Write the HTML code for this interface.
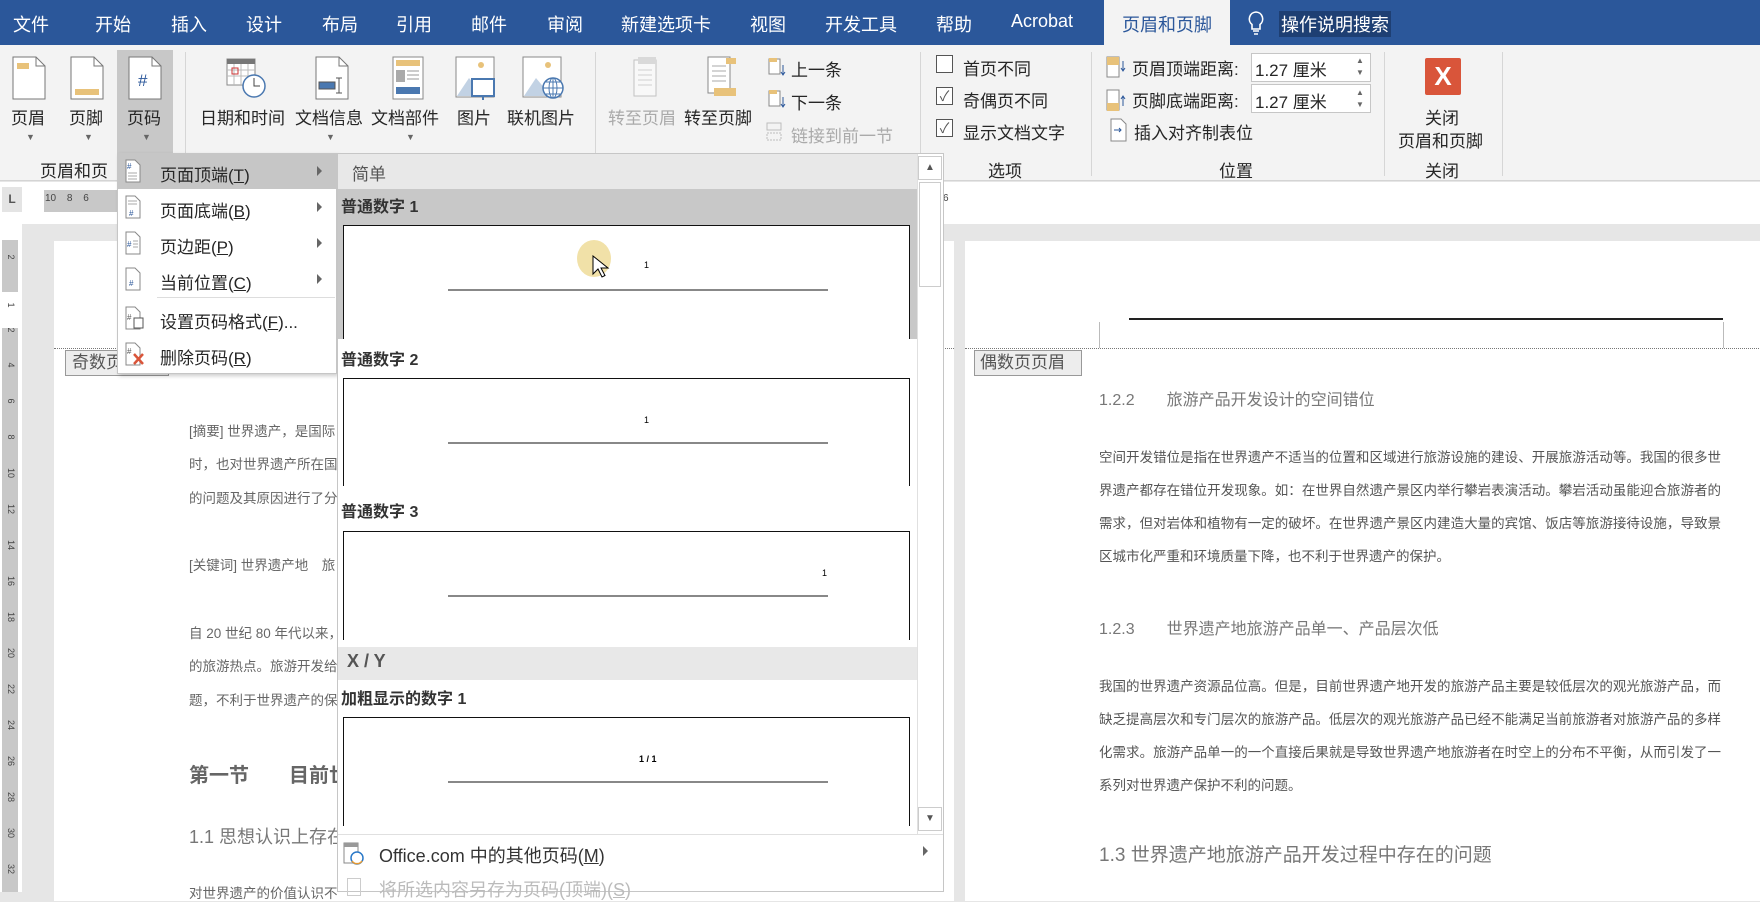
<!DOCTYPE html>
<html><head><meta charset="utf-8">
<style>
*{margin:0;padding:0;box-sizing:border-box}
body{width:1760px;height:892px;overflow:hidden;position:relative;background:#e6e6e6;font-family:"Liberation Sans","Noto Sans CJK SC",sans-serif;color:#333}
.a{position:absolute;white-space:nowrap}
.tab{position:absolute;top:11px;color:#fff;font-size:18px}
.rl{position:absolute;font-size:17px;color:#262626}
.gl{position:absolute;top:157px;font-size:17px;color:#262626}
.sep{position:absolute;top:52px;width:1px;height:124px;background:#d6d6d6}
.dd{position:absolute;font-size:9px;color:#666}
.mi{position:absolute;left:160px;font-size:17px;color:#262626}
.arr{position:absolute;left:317px;width:0;height:0;border-left:5px solid #666;border-top:5px solid transparent;border-bottom:5px solid transparent}
.glab{position:absolute;left:341px;font-size:16px;font-weight:bold;color:#333}
.box{position:absolute;left:343px;width:567px;background:#fff;border:1.5px solid #111}
.box .ln{position:absolute;left:104px;width:380px;height:2px;background:#888}
.box .n{position:absolute;font-size:9px;color:#000}
.pt{position:absolute;font-size:13.5px;color:#666}
.rp{position:absolute;left:1099px;width:622px;font-size:13.5px;color:#555;text-align:justify;text-align-last:justify;white-space:nowrap;overflow:hidden}
.vn{position:absolute;left:4px;width:14px;font-size:9px;color:#444;transform:rotate(90deg);text-align:center}
</style></head><body>
<div class="a" style="left:0;top:0;width:1760px;height:45px;background:#2b579a"></div>
<div class="tab" style="left:13px">文件</div>
<div class="tab" style="left:95px">开始</div>
<div class="tab" style="left:171px">插入</div>
<div class="tab" style="left:246px">设计</div>
<div class="tab" style="left:322px">布局</div>
<div class="tab" style="left:396px">引用</div>
<div class="tab" style="left:471px">邮件</div>
<div class="tab" style="left:547px">审阅</div>
<div class="tab" style="left:621px">新建选项卡</div>
<div class="tab" style="left:750px">视图</div>
<div class="tab" style="left:825px">开发工具</div>
<div class="tab" style="left:936px">帮助</div>
<div class="tab" style="left:1011px">Acrobat</div>
<div class="a" style="left:1104px;top:0;width:126px;height:46px;background:#f3f3f3"></div>
<div class="tab" style="left:1122px;color:#2b579a">页眉和页脚</div>
<svg class="a" style="left:1246px;top:10px" width="20" height="26" viewBox="0 0 20 26"><path d="M10 2a7 7 0 0 0-4 12.5V19h8v-4.5A7 7 0 0 0 10 2zM7 21h6M8 24h4" fill="none" stroke="#fff" stroke-width="1.6"/></svg>
<div class="tab" style="left:1279px;background:#1e3f73;padding:0 2px">操作说明搜索</div>

<div class="a" style="left:0;top:45px;width:1760px;height:136px;background:#f3f3f3;border-bottom:1px solid #d4d4d4"></div>
<div class="a" style="left:117px;top:50px;width:56px;height:104px;background:#c8c8c8"></div>
<svg class="a" style="left:12px;top:56px" width="34" height="44"><path d="M1 1h23l9 9v33H1z" fill="#fff" stroke="#777"/><path d="M24 1v9h9" fill="none" stroke="#777"/><rect x="5" y="7" width="12" height="6" fill="#e8c27a"/></svg>
<svg class="a" style="left:70px;top:56px" width="34" height="44"><path d="M1 1h23l9 9v33H1z" fill="#fff" stroke="#777"/><path d="M24 1v9h9" fill="none" stroke="#777"/><rect x="5" y="33" width="24" height="6" fill="#e8c27a"/></svg>
<svg class="a" style="left:128px;top:56px" width="34" height="44"><path d="M1 1h23l9 9v33H1z" fill="#fff" stroke="#777"/><path d="M24 1v9h9" fill="none" stroke="#777"/><text x="10" y="30" font-size="17" fill="#2b579a" font-family="Liberation Sans">#</text></svg>
<div class="rl" style="left:11px;top:104px">页眉</div>
<div class="rl" style="left:69px;top:104px">页脚</div>
<div class="rl" style="left:127px;top:104px">页码</div>
<div class="dd" style="left:26px;top:132px">▼</div><div class="dd" style="left:84px;top:132px">▼</div><div class="dd" style="left:142px;top:132px">▼</div>
<div class="sep" style="left:185px"></div>
<svg class="a" style="left:226px;top:58px" width="42" height="42"><rect x="1" y="1" width="28" height="26" fill="#fff" stroke="#888"/><rect x="1" y="1" width="28" height="5" fill="#777"/><path d="M1 12h28M1 18h28M8 6v21M15 6v21M22 6v21" stroke="#bbb"/><rect x="6" y="10" width="6" height="6" fill="none" stroke="#c33"/><circle cx="28" cy="28" r="11" fill="#fff" stroke="#4a78b0" stroke-width="1.5"/><path d="M28 20v8h6" fill="none" stroke="#444"/></svg>
<svg class="a" style="left:315px;top:56px" width="34" height="44"><path d="M1 1h23l9 9v33H1z" fill="#fff" stroke="#777"/><path d="M24 1v9h9" fill="none" stroke="#777"/><rect x="4" y="26" width="16" height="7" fill="#4a78b0" stroke="#555"/><path d="M24 22v15M21 22h6M21 37h6" stroke="#555"/></svg>
<svg class="a" style="left:392px;top:56px" width="32" height="44"><rect x="1" y="1" width="30" height="42" fill="#fff" stroke="#888"/><rect x="4" y="4" width="24" height="6" fill="#e8c27a"/><rect x="4" y="14" width="9" height="12" fill="#aaa"/><path d="M15 15h12M15 19h12M15 23h12" stroke="#999"/><rect x="4" y="31" width="24" height="7" fill="#4a78b0"/></svg>
<svg class="a" style="left:455px;top:56px" width="44" height="46"><rect x="1" y="1" width="38" height="40" fill="#fff" stroke="#888"/><circle cx="26" cy="9" r="3" fill="#e8c27a"/><path d="M2 40l12-18 10 12 6-6 9 12z" fill="#c2d2e4"/><rect x="17" y="23" width="22" height="17" fill="#fff" stroke="#4a78b0" stroke-width="2"/><path d="M28 40v4" stroke="#4a78b0" stroke-width="2"/></svg>
<svg class="a" style="left:522px;top:56px" width="44" height="46"><rect x="1" y="1" width="38" height="40" fill="#fff" stroke="#888"/><circle cx="26" cy="9" r="3" fill="#e8c27a"/><path d="M2 40l12-18 10 12 6-6 9 12z" fill="#c2d2e4"/><circle cx="31" cy="32" r="10" fill="#fff" stroke="#4a78b0" stroke-width="1.5"/><path d="M21 32h20M31 22v20M24 26h14M24 38h14" stroke="#4a78b0"/><ellipse cx="31" cy="32" rx="4" ry="10" fill="none" stroke="#4a78b0"/></svg>
<div class="rl" style="left:200px;top:104px">日期和时间</div>
<div class="rl" style="left:295px;top:104px">文档信息</div>
<div class="rl" style="left:371px;top:104px">文档部件</div>
<div class="rl" style="left:457px;top:104px">图片</div>
<div class="rl" style="left:507px;top:104px">联机图片</div>
<div class="dd" style="left:326px;top:132px">▼</div><div class="dd" style="left:406px;top:132px">▼</div>
<div class="sep" style="left:595px"></div>
<svg class="a" style="left:630px;top:56px" width="30" height="44" opacity=".45"><rect x="4" y="4" width="22" height="36" fill="#fff" stroke="#888"/><rect x="8" y="1" width="18" height="7" fill="#bbb"/><path d="M8 14h14M8 19h14M8 24h14M8 29h14" stroke="#aaa"/></svg>
<svg class="a" style="left:706px;top:56px" width="32" height="44"><rect x="2" y="1" width="22" height="36" fill="#fff" stroke="#888"/><path d="M6 10h14M6 15h14M6 20h14M6 25h14" stroke="#aaa"/><rect x="8" y="32" width="22" height="8" fill="#e8c27a"/><rect x="20" y="2" width="10" height="6" fill="#e8c27a"/></svg>
<div class="rl" style="left:608px;top:104px;color:#aaa">转至页眉</div>
<div class="rl" style="left:684px;top:104px">转至页脚</div>
<svg class="a" style="left:768px;top:57px" width="18" height="20"><rect x="1" y="2" width="11" height="15" fill="#fff" stroke="#888"/><rect x="1" y="1" width="8" height="4" fill="#e8c27a"/><path d="M15 8v9M13 15l2 3 2-3" stroke="#2b579a" fill="none"/></svg>
<svg class="a" style="left:768px;top:89px" width="18" height="20"><rect x="1" y="2" width="11" height="15" fill="#fff" stroke="#888"/><rect x="1" y="1" width="8" height="4" fill="#e8c27a"/><path d="M15 8v9M13 15l2 3 2-3" stroke="#2b579a" fill="none"/></svg>
<div class="rl" style="left:791px;top:56px">上一条</div>
<div class="rl" style="left:791px;top:89px">下一条</div>
<svg class="a" style="left:766px;top:122px" width="18" height="20" opacity=".5"><rect x="1" y="1" width="14" height="7" fill="none" stroke="#888"/><rect x="1" y="11" width="14" height="7" fill="none" stroke="#888" stroke-dasharray="2 1"/></svg>
<div class="rl" style="left:791px;top:122px;color:#aaa">链接到前一节</div>
<div class="sep" style="left:920px"></div>
<div class="a" style="left:936px;top:55px;width:17px;height:18px;border:1px solid #555;background:#fff"></div>
<div class="a" style="left:936px;top:87px;width:17px;height:18px;border:1px solid #555;background:#fff;font-size:14px;line-height:16px;text-align:center;color:#555">✓</div>
<div class="a" style="left:936px;top:119px;width:17px;height:18px;border:1px solid #555;background:#fff;font-size:14px;line-height:16px;text-align:center;color:#555">✓</div>
<div class="rl" style="left:963px;top:55px">首页不同</div>
<div class="rl" style="left:963px;top:87px">奇偶页不同</div>
<div class="rl" style="left:963px;top:119px">显示文档文字</div>
<div class="sep" style="left:1091px"></div>
<svg class="a" style="left:1106px;top:56px" width="22" height="24"><rect x="1" y="1" width="12" height="20" fill="#fff" stroke="#888"/><rect x="1" y="1" width="12" height="8" fill="#e8c27a"/><path d="M17 5v9M15 12l2 3 2-3" stroke="#2b579a" fill="none"/></svg>
<svg class="a" style="left:1106px;top:89px" width="22" height="24"><rect x="1" y="1" width="12" height="20" fill="#fff" stroke="#888"/><rect x="1" y="14" width="12" height="8" fill="#e8c27a"/><path d="M17 17v-9M15 10l2-3 2 3" stroke="#2b579a" fill="none"/></svg>
<div class="rl" style="left:1132px;top:55px">页眉顶端距离:</div>
<div class="rl" style="left:1132px;top:87px">页脚底端距离:</div>
<div class="a" style="left:1251px;top:53px;width:120px;height:29px;background:#fff;border:1px solid #c6c6c6"></div>
<div class="a" style="left:1251px;top:84px;width:120px;height:29px;background:#fff;border:1px solid #c6c6c6"></div>
<div class="rl" style="left:1255px;top:56px">1.27 厘米</div>
<div class="rl" style="left:1255px;top:88px">1.27 厘米</div>
<div class="dd" style="left:1356px;top:55px;font-size:8px;line-height:12px">▲<br>▼</div>
<div class="dd" style="left:1356px;top:87px;font-size:8px;line-height:12px">▲<br>▼</div>
<svg class="a" style="left:1110px;top:118px" width="18" height="24"><path d="M1 1h10l5 5v17H1z" fill="#fff" stroke="#888"/><path d="M4 12h7M9 10l2 2-2 2" stroke="#2b579a" fill="none"/></svg>
<div class="rl" style="left:1134px;top:119px">插入对齐制表位</div>
<div class="sep" style="left:1384px"></div>
<div class="a" style="left:1425px;top:58px;width:36px;height:37px;background:#d9553a;border-radius:2px;color:#fff;font-size:26px;font-weight:bold;text-align:center;line-height:37px">X</div>
<div class="rl" style="left:1425px;top:104px">关闭</div>
<div class="rl" style="left:1398px;top:127px">页眉和页脚</div>
<div class="sep" style="left:1502px"></div>
<div class="gl" style="left:40px">页眉和页</div>
<div class="gl" style="left:988px">选项</div>
<div class="gl" style="left:1219px">位置</div>
<div class="gl" style="left:1425px">关闭</div>

<div class="a" style="left:0;top:182px;width:1760px;height:42px;background:#fff"></div>
<div class="a" style="left:2px;top:187px;width:20px;height:25px;background:#e4e4e4;font-size:12px;font-weight:bold;color:#555;text-align:center;line-height:25px">L</div>
<div class="a" style="left:44px;top:190px;width:90px;height:22px;background:#c8c8c8"></div>
<div class="a" style="left:45px;top:193px;font-size:10px;color:#444;word-spacing:8px">10 8 6</div>
<div class="a" style="left:943px;top:193px;font-size:10px;color:#444">6</div>
<div class="a" style="left:0;top:224px;width:22px;height:668px;background:#fff"></div>
<div class="a" style="left:2px;top:240px;width:16px;height:652px;background:#c8c8c8"></div>
<div class="a" style="left:2px;top:292px;width:16px;height:36px;background:#fff"></div>
<div class="vn" style="top:252px">2</div>
<div class="vn" style="top:300px">1</div>
<div class="vn" style="top:325px">2</div>
<div class="vn" style="top:360px">4</div>
<div class="vn" style="top:396px">6</div>
<div class="vn" style="top:432px">8</div>
<div class="vn" style="top:468px">10</div>
<div class="vn" style="top:504px">12</div>
<div class="vn" style="top:540px">14</div>
<div class="vn" style="top:576px">16</div>
<div class="vn" style="top:612px">18</div>
<div class="vn" style="top:648px">20</div>
<div class="vn" style="top:684px">22</div>
<div class="vn" style="top:720px">24</div>
<div class="vn" style="top:756px">26</div>
<div class="vn" style="top:792px">28</div>
<div class="vn" style="top:828px">30</div>
<div class="vn" style="top:864px">32</div>

<div class="a" style="left:54px;top:241px;width:900px;height:660px;background:#fff"></div>
<div class="a" style="left:54px;top:348px;width:900px;border-top:1px dotted #777"></div>
<div class="a" style="left:65px;top:350px;width:104px;height:26px;background:#ededed;border:1px solid #999;font-size:17px;color:#555;padding-left:6px;line-height:24px">奇数页页眉</div>
<div class="pt" style="left:189px;top:420px">[摘要] 世界遗产，是国际</div>
<div class="pt" style="left:189px;top:453px">时，也对世界遗产所在国</div>
<div class="pt" style="left:189px;top:487px">的问题及其原因进行了分</div>
<div class="pt" style="left:189px;top:554px">[关键词] 世界遗产地　旅</div>
<div class="pt" style="left:189px;top:622px">自 20 世纪 80 年代以来，</div>
<div class="pt" style="left:189px;top:655px">的旅游热点。旅游开发给</div>
<div class="pt" style="left:189px;top:689px">题，不利于世界遗产的保</div>
<div class="a" style="left:189px;top:759px;font-size:20px;font-weight:bold;color:#666">第一节　　目前世</div>
<div class="a" style="left:189px;top:823px;font-size:18px;color:#777">1.1 思想认识上存在</div>
<div class="pt" style="left:189px;top:882px">对世界遗产的价值认识不</div>

<div class="a" style="left:965px;top:241px;width:800px;height:660px;background:#fff"></div>
<div class="a" style="left:1129px;top:318px;width:594px;height:2px;background:#222"></div>
<div class="a" style="left:1099px;top:322px;width:1px;height:26px;background:#bbb"></div>
<div class="a" style="left:1723px;top:322px;width:1px;height:26px;background:#bbb"></div>
<div class="a" style="left:965px;top:348px;width:800px;border-top:1px dotted #777"></div>
<div class="a" style="left:974px;top:350px;width:108px;height:26px;background:#ededed;border:1px solid #999;font-size:17px;color:#555;padding-left:5px;line-height:24px">偶数页页眉</div>
<div class="a" style="left:1099px;top:386px;font-size:16px;color:#777">1.2.2　　旅游产品开发设计的空间错位</div>
<div class="rp" style="top:446px">空间开发错位是指在世界遗产不适当的位置和区域进行旅游设施的建设、开展旅游活动等。我国的很多世</div>
<div class="rp" style="top:479px">界遗产都存在错位开发现象。如：在世界自然遗产景区内举行攀岩表演活动。攀岩活动虽能迎合旅游者的</div>
<div class="rp" style="top:512px">需求，但对岩体和植物有一定的破坏。在世界遗产景区内建造大量的宾馆、饭店等旅游接待设施，导致景</div>
<div class="rp" style="top:545px;text-align-last:left">区城市化严重和环境质量下降，也不利于世界遗产的保护。</div>
<div class="a" style="left:1099px;top:615px;font-size:16px;color:#777">1.2.3　　世界遗产地旅游产品单一、产品层次低</div>
<div class="rp" style="top:675px">我国的世界遗产资源品位高。但是，目前世界遗产地开发的旅游产品主要是较低层次的观光旅游产品，而</div>
<div class="rp" style="top:708px">缺乏提高层次和专门层次的旅游产品。低层次的观光旅游产品已经不能满足当前旅游者对旅游产品的多样</div>
<div class="rp" style="top:741px">化需求。旅游产品单一的一个直接后果就是导致世界遗产地旅游者在时空上的分布不平衡，从而引发了一</div>
<div class="rp" style="top:774px;text-align-last:left">系列对世界遗产保护不利的问题。</div>
<div class="a" style="left:1099px;top:840px;font-size:19px;color:#777">1.3 世界遗产地旅游产品开发过程中存在的问题</div>

<div class="a" style="left:117px;top:153px;width:220px;height:221px;background:#fff;border:1px solid #c6c6c6;box-shadow:2px 2px 4px rgba(0,0,0,.2)"></div>
<div class="a" style="left:118px;top:154px;width:218px;height:35px;background:#c6c6c6"></div>
<div class="a" style="left:157px;top:297px;width:178px;height:1px;background:#ddd"></div>
<svg class="a" style="left:125px;top:159px" width="16" height="24"><path d="M1 1h9l5 5v17H1z" fill="#fff" stroke="#888"/><text x="2" y="10" font-size="8" fill="#2b579a">#</text><path d="M3 14h9M3 17h9M3 20h9" stroke="#aaa"/></svg>
<svg class="a" style="left:125px;top:195px" width="16" height="24"><path d="M1 1h9l5 5v17H1z" fill="#fff" stroke="#888"/><path d="M3 6h9M3 9h9" stroke="#aaa"/><text x="4" y="21" font-size="8" fill="#2b579a">#</text></svg>
<svg class="a" style="left:125px;top:231px" width="16" height="24"><path d="M1 1h9l5 5v17H1z" fill="#fff" stroke="#888"/><text x="2" y="16" font-size="8" fill="#2b579a">#</text><path d="M8 10h5M8 13h5M8 16h5" stroke="#aaa"/></svg>
<svg class="a" style="left:125px;top:267px" width="16" height="24"><path d="M1 1h9l5 5v17H1z" fill="#fff" stroke="#888"/><text x="4" y="19" font-size="8" fill="#2b579a">#</text></svg>
<svg class="a" style="left:125px;top:306px" width="20" height="24"><path d="M1 1h9l5 5v17H1z" fill="#fff" stroke="#888"/><text x="2" y="14" font-size="8" fill="#555">#</text><rect x="9" y="12" width="9" height="10" fill="#fff" stroke="#555"/></svg>
<svg class="a" style="left:125px;top:342px" width="22" height="24"><path d="M1 1h9l5 5v17H1z" fill="#fff" stroke="#888"/><text x="2" y="12" font-size="8" fill="#555">#</text><path d="M9 12l9 10M18 12l-9 10" stroke="#d9553a" stroke-width="2.5"/></svg>
<div class="mi" style="top:161px">页面顶端(<u>T</u>)</div>
<div class="mi" style="top:197px">页面底端(<u>B</u>)</div>
<div class="mi" style="top:233px">页边距(<u>P</u>)</div>
<div class="mi" style="top:269px">当前位置(<u>C</u>)</div>
<div class="mi" style="top:308px">设置页码格式(<u>F</u>)...</div>
<div class="mi" style="top:344px">删除页码(<u>R</u>)</div>
<div class="arr" style="top:166px"></div><div class="arr" style="top:202px"></div><div class="arr" style="top:238px"></div><div class="arr" style="top:274px"></div>

<div class="a" style="left:337px;top:153px;width:607px;height:739px;background:#fff;border:1px solid #c6c6c6"></div>
<div class="a" style="left:338px;top:154px;width:579px;height:35px;background:#e8e8e8"></div>
<div class="a" style="left:352px;top:160px;font-size:17px;color:#555">简单</div>
<div class="a" style="left:338px;top:189px;width:579px;height:150px;background:#c8c8c8"></div>
<div class="glab" style="top:193px">普通数字 1</div>
<div class="box" style="top:225px;height:114px;border-bottom:none"><div class="n" style="left:300px;top:34px">1</div><div class="ln" style="top:63px"></div></div>
<div class="a" style="left:577px;top:240px;width:34px;height:37px;border-radius:50%;background:rgba(232,205,110,.6)"></div>
<svg class="a" style="left:592px;top:255px" width="18" height="26"><path d="M1 1v18l5-5 4 8 3-1.5-4-7.5h7z" fill="#fff" stroke="#000"/></svg>
<div class="glab" style="top:346px">普通数字 2</div>
<div class="box" style="top:378px;height:108px;border-bottom:none"><div class="n" style="left:300px;top:36px">1</div><div class="ln" style="top:63px"></div></div>
<div class="glab" style="top:498px">普通数字 3</div>
<div class="box" style="top:531px;height:109px;border-bottom:none"><div class="n" style="left:478px;top:36px">1</div><div class="ln" style="top:63px"></div></div>
<div class="a" style="left:338px;top:647px;width:579px;height:33px;background:#e8e8e8"></div>
<div class="a" style="left:347px;top:651px;font-size:18px;font-weight:bold;color:#555">X / Y</div>
<div class="glab" style="top:685px">加粗显示的数字 1</div>
<div class="box" style="top:717px;height:109px;border-bottom:none"><div class="n" style="left:295px;top:36px;font-weight:bold">1 / 1</div><div class="ln" style="top:63px"></div></div>
<div class="a" style="left:917px;top:154px;width:26px;height:680px;background:#fff;border-left:1px solid #e0e0e0"></div>
<div class="a" style="left:918px;top:156px;width:24px;height:24px;border:1px solid #ccc;font-size:10px;color:#555;text-align:center;line-height:22px">▲</div>
<div class="a" style="left:919px;top:182px;width:22px;height:105px;background:#fff;border:1px solid #ccc"></div>
<div class="a" style="left:918px;top:807px;width:24px;height:24px;border:1px solid #ccc;font-size:10px;color:#555;text-align:center;line-height:22px">▼</div>
<div class="a" style="left:338px;top:834px;width:605px;height:1px;background:#e0e0e0"></div>
<svg class="a" style="left:343px;top:842px" width="24" height="24"><rect x="1" y="1" width="14" height="20" fill="#fff" stroke="#888"/><rect x="1" y="1" width="14" height="4" fill="#999"/><circle cx="14" cy="16" r="6" fill="#fff" stroke="#2b79c8" stroke-width="1.5"/><path d="M9 19a6 6 0 0 0 10 0" stroke="#e89a30" stroke-width="1.5" fill="none"/></svg>
<div class="a" style="left:379px;top:842px;font-size:18px;color:#333">Office.com 中的其他页码(<u>M</u>)</div>
<div class="a" style="left:923px;top:846px;width:0;height:0;border-left:5px solid #666;border-top:5px solid transparent;border-bottom:5px solid transparent"></div>
<div class="a" style="left:347px;top:878px;width:14px;height:18px;border:1px solid #ccc"></div>
<div class="a" style="left:379px;top:876px;font-size:18px;color:#bbb">将所选内容另存为页码(顶端)(<u>S</u>)</div>
</body></html>
